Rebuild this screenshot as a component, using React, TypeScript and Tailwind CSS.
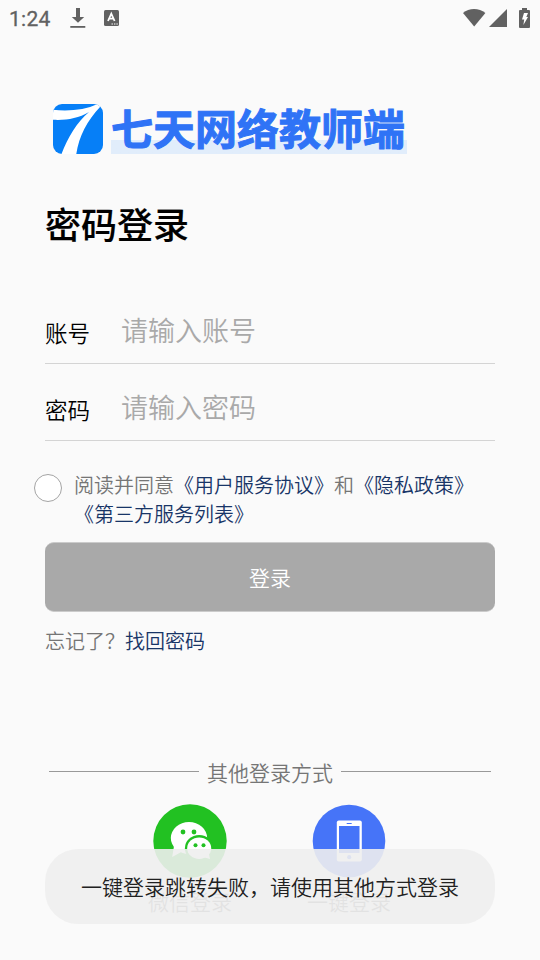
import React from "react";

function StatusBar() {
  return (
    <header className="flex h-9 items-center justify-between text-[#616161]">
      <div className="flex h-9 items-center pl-[9px]">
        <span className="w-[61px] pt-px font-['Roboto',sans-serif] text-[21px] font-normal leading-9 tracking-[0.3px] [-webkit-text-stroke:0.3px_#616161]">1:24</span>
        <svg className="h-[22px] w-4" viewBox="0 0 16 22" fill="currentColor">
          <path d="M6 1h4v9h4.2L8 15.8 1.8 10H6z" />
          <rect x="0.3" y="19" width="15" height="1.8" />
        </svg>
        <svg className="ml-[18px] h-4 w-[15px]" viewBox="0 0 15 16">
          <rect width="15" height="16" rx="1.5" fill="currentColor" />
          <path d="M4 11 7.3 3.7 10.6 11M5.3 8.7H9.5" fill="none" stroke="#fff" strokeWidth="1.8" />
          <path d="M7.5 14h1.4M10 14h1.4M12.4 14h1.4" stroke="#fff" strokeWidth="1.2" />
        </svg>
      </div>
      <div className="flex h-9 items-center pr-[10px]">
        <svg className="h-[20px] w-6" viewBox="0 0 24 20" fill="currentColor">
          <path d="M0 5C6-.5 16-.5 22.4 5L11.2 18.6z" />
        </svg>
        <svg className="ml-[2px] h-[18px] w-[18px]" viewBox="0 0 18 18" fill="currentColor">
          <path d="M18 0v18H0z" />
        </svg>
        <svg className="-mt-px ml-3 h-5 w-[11px]" viewBox="0 0 11 20">
          <path d="M3 0h5v2h2q1 0 1 1v16q0 1-1 1H1q-1 0-1-1V3q0-1 1-1h2z" fill="currentColor" />
          <path d="M5 5h4L7.3 9H9L4.4 17l.8-5.6H3z" fill="#fff" />
        </svg>
      </div>
    </header>
  );
}

function Logo() {
  return (
    <div className="mt-[67px] flex h-[52px] pl-[53px]">
      <svg className="mt-px h-[50px] w-[50px]" viewBox="0 0 50 50">
        <defs>
          <clipPath id="tile">
            <rect width="50" height="50" rx="9" />
          </clipPath>
        </defs>
        <g clipPath="url(#tile)">
          <rect width="50" height="50" fill="#067ff7" />
          <path d="M0 5.8C16 7.4 32 6 44.5 0H50L47 3C34 17 26 32 23.3 50H8.5C15 33 24 18 36 8 25 14.5 13 16.5 0 15.8z" fill="#fff" />
        </g>
      </svg>
      <div className="ml-2 flex h-[51px] w-[296px] bg-linear-to-b from-transparent from-72% to-[#e1edfb] to-72% whitespace-nowrap text-[42px] font-bold leading-[47px] text-[#2f73f6] [-webkit-text-stroke:1px_#2f73f6]">
        七天网络教师端
      </div>
    </div>
  );
}

function Field({ label, hint }: { label: string; hint: string }) {
  return (
    <div className="mx-[45px] flex h-[77px] items-start border-b border-[#d4d4d4]">
      <span className="w-[76px] pt-[29px] text-[22.5px] leading-8 text-black">{label}</span>
      <span className="pt-[23px] text-[27px] leading-10 text-[#a9a9a9]">{hint}</span>
    </div>
  );
}

function Agreement() {
  return (
    <div className="mt-[29px] flex h-[72px] pl-[34px]">
      <span className="mt-[4px] size-7 rounded-full border border-[#a4a4a4] bg-white" />
      <p className="ml-3 text-[20px] leading-[29px] whitespace-nowrap text-[#757575]">
        阅读并同意<span className="text-[#183567]">《用户服务协议》</span>和<span className="text-[#183567]">《隐私政策》</span>
        <br />
        <span className="text-[#183567]">《第三方服务列表》</span>
      </p>
    </div>
  );
}

function WeChatIcon() {
  return (
    <svg className="size-[74px]" viewBox="0 0 74 74">
      <circle cx="37" cy="37" r="36.7" fill="#22c122" />
      <ellipse cx="36" cy="34" rx="18.2" ry="16" fill="#fff" />
      <path d="M21 42l-1.8 11 9-5z" fill="#fff" />
      <circle cx="30" cy="28" r="2.4" fill="#22c122" />
      <circle cx="41" cy="28" r="2.4" fill="#22c122" />
      <ellipse cx="46.2" cy="44.2" rx="14.3" ry="13.2" fill="#22c122" />
      <ellipse cx="46.2" cy="44.2" rx="12" ry="10.8" fill="#fff" />
      <path d="M50 53l7 2-1.5-7z" fill="#fff" />
      <circle cx="42.5" cy="41.3" r="2" fill="#22c122" />
      <circle cx="50.5" cy="41.3" r="2" fill="#22c122" />
    </svg>
  );
}

function PhoneIcon() {
  return (
    <svg className="size-[74px]" viewBox="0 0 74 74">
      <circle cx="37" cy="37" r="36.3" fill="#4674f8" />
      <rect x="24.8" y="16.5" width="25" height="41" rx="2" fill="#fff" />
      <rect x="27" y="22" width="20.5" height="27" fill="#4674f8" />
      <path d="M34.7 19.5h5" stroke="#4674f8" />
      <circle cx="37.2" cy="53.2" r="2.1" fill="#4674f8" />
    </svg>
  );
}

export default function App() {
  return (
    <main className="relative h-[960px] w-[540px] overflow-hidden bg-[#fafafa] font-['Noto_Sans_CJK_SC',sans-serif] font-[350]">
      <StatusBar />
      <Logo />
      <h1 className="mt-[42px] ml-[45px] h-[51px] text-[36px] font-medium leading-[52px] text-black [-webkit-text-stroke:0.15px_#000]">密码登录</h1>
      <div className="mt-[39px]">
        <Field label="账号" hint="请输入账号" />
        <Field label="密码" hint="请输入密码" />
      </div>
      <Agreement />
      <button className="mx-[45px] flex h-[70px] w-[450px] items-center justify-center rounded-[9px] border-y border-[#cbcbcb] bg-[#a9a9a9] pt-px text-[21px] text-white">
        登录
      </button>
      <p className="mt-[14px] ml-[45px] h-[30px] text-[20px] leading-[30px] text-[#757575]">
        忘记了？<span className="text-[#183567]">找回密码</span>
      </p>
      <div className="mt-[100px] flex h-[30px] items-center justify-center px-[49px]">
        <span className="h-px w-[150px] bg-[#999]" />
        <span className="w-[142px] pt-px text-center text-[21px] leading-[30px] text-[#757575]">其他登录方式</span>
        <span className="h-px w-[150px] bg-[#999]" />
      </div>
      <div className="mt-[18px] flex pl-[110px] text-[21px] leading-[30px] text-[#757575]">
        <div className="flex w-40 flex-col items-center">
          <WeChatIcon />
          <span className="mt-[8px]">微信登录</span>
        </div>
        <div className="flex w-[158px] flex-col items-center">
          <PhoneIcon />
          <span className="mt-[8px]">一键登录</span>
        </div>
      </div>
      <div className="absolute top-[849px] left-[45px] flex h-[75px] w-[450px] items-center justify-center rounded-[33px] bg-[#eeeeee]/90 pt-px text-[21px] text-[#212121]">
        一键登录跳转失败，请使用其他方式登录
      </div>
    </main>
  );
}
